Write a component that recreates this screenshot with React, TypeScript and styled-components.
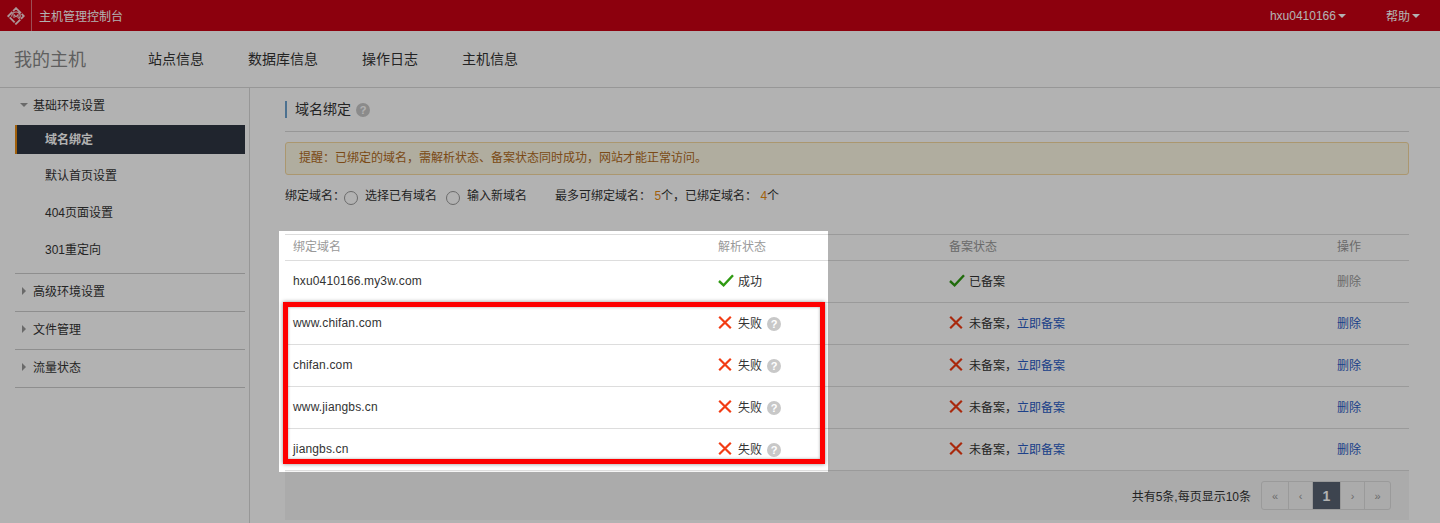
import React from "react";
import styled, { createGlobalStyle } from "styled-components";

const GlobalStyle = createGlobalStyle`
  html, body {
    margin: 0;
    padding: 0;
    background: #fff;
  }
  body {
    font-family: "Liberation Sans", "Noto Sans CJK SC", sans-serif;
    font-size: 12px;
    color: #333;
  }
  * {
    box-sizing: border-box;
  }
`;

const Page = styled.div`
  position: relative;
  height: 523px;
  overflow: hidden;
`;

const TopBar = styled.header`
  height: 31px;
  background: #c90013;
  display: flex;
  align-items: center;
  color: #fff;
  padding-right: 20px;
`;

const LogoCell = styled.div`
  width: 32px;
  height: 31px;
  border-right: 1px solid #e0707a;
  display: flex;
  align-items: center;
  justify-content: center;
`;

const ConsoleTitle = styled.div`
  margin-left: 7px;
  flex: 1;
  font-size: 12px;
`;

const TopMenu = styled.div<{ $gap: number }>`
  margin-left: ${(p) => p.$gap}px;
  display: flex;
  align-items: center;
  gap: 2px;
`;

const Caret = styled.span`
  width: 0;
  height: 0;
  border-left: 4px solid transparent;
  border-right: 4px solid transparent;
  border-top: 4px solid currentColor;
`;

const SubNav = styled.nav`
  height: 57px;
  border-bottom: 1px solid #d9d9d9;
  display: flex;
  align-items: center;
  padding: 0 0 2px 14px;
  font-size: 14px;
  background: #fff;
`;

const HostTitle = styled.div`
  width: 134px;
  font-size: 18px;
  color: #888;
`;

const NavLink = styled.a`
  margin-right: 44px;
  color: #333;
`;

const Body = styled.div`
  display: flex;
`;

const Sidebar = styled.aside`
  width: 250px;
  height: 435px;
  border-right: 1px solid #d9d9d9;
  padding: 0 4px 0 15px;
  flex: none;
`;

const Group = styled.div<{ $open?: boolean }>`
  border-bottom: 1px solid #ccc;
  padding-bottom: ${(p) => (p.$open ? 6 : 4)}px;
`;

const GroupTitle = styled.div`
  height: 33px;
  display: flex;
  align-items: center;
  padding-left: 5px;
  color: #333;
  gap: 4px;
`;

const ArrowDown = styled.span`
  width: 0;
  height: 0;
  border-left: 4px solid transparent;
  border-right: 4px solid transparent;
  border-top: 4px solid #999;
  margin-right: 1px;
`;

const ArrowRight = styled.span`
  width: 0;
  height: 0;
  margin-left: 2px;
  margin-right: 3px;
  border-top: 4px solid transparent;
  border-bottom: 4px solid transparent;
  border-left: 4px solid #999;
`;

const SideItem = styled.div<{ $active?: boolean }>`
  height: ${(p) => (p.$active ? 29 : 37)}px;
  margin: ${(p) => (p.$active ? "4px 0 2px" : "0")};
  display: flex;
  align-items: center;
  padding: ${(p) => (p.$active ? "0 0 3px 28px" : "0 0 0 30px")};
  color: ${(p) => (p.$active ? "#fff" : "#333")};
  background: ${(p) => (p.$active ? "#2f3542" : "transparent")};
  border-left: ${(p) => (p.$active ? "2px solid #e78a11" : "none")};
  font-weight: ${(p) => (p.$active ? 700 : 400)};
`;

const Main = styled.main`
  flex: 1;
  padding: 0 31px 0 35px;
`;

const SectionHead = styled.div`
  height: 44px;
  border-bottom: 1px solid #d9d9d9;
  display: flex;
  align-items: center;
`;

const SectionTitle = styled.h2`
  margin: 0 5px 0 0;
  height: 17px;
  line-height: 17px;
  border-left: 2px solid #6ea2cf;
  padding-left: 8px;
  font-size: 14px;
  font-weight: 400;
  color: #333;
`;

const Help = styled.span`
  width: 14px;
  height: 14px;
  border-radius: 50%;
  background: #c8c8c8;
  color: #fff;
  font-size: 11px;
  font-weight: 700;
  line-height: 14px;
  text-align: center;
  display: inline-block;
  flex: none;
`;

const RowHelp = styled(Help)`
  margin-top: 2px;
`;

const Notice = styled.div`
  margin-top: 10px;
  height: 33px;
  border: 1px solid #f5d8a0;
  border-radius: 3px;
  background: #fdf8e4;
  color: #b06a22;
  display: flex;
  align-items: center;
  padding: 0 0 5px 13px;
`;

const BindRow = styled.div`
  margin-top: 10px;
  height: 20px;
  display: flex;
  align-items: center;
  padding-bottom: 2px;
  color: #333;
`;

const BindLabel = styled.span`
  width: 54px;
  white-space: nowrap;
`;

const RadioDot = styled.span`
  width: 14px;
  height: 14px;
  border: 1px solid #999;
  border-radius: 50%;
  margin: 7px 7px 0 5px;
  flex: none;
`;

const RadioLabel = styled.span`
  margin-right: 4px;
`;

const Limit = styled.span`
  margin-left: 24px;
`;

const Count = styled.b`
  font-weight: 400;
  color: #e78a11;
`;

const DomainTable = styled.table`
  margin-top: 29px;
  width: 100%;
  border-collapse: collapse;
  table-layout: fixed;
  border-top: 1px solid #ddd;

  th {
    height: 26px;
    padding: 0 8px 4px;
    text-align: left;
    font-weight: 400;
    color: #999;
    border-bottom: 1px solid #ddd;
  }

  td {
    height: 42px;
    padding: 0 8px 2px;
    color: #333;
    border-bottom: 1px solid #ddd;
  }
`;

const DomainCell = styled.td`
  letter-spacing: 0.15px;
`;

const StatusCell = styled.div`
  display: flex;
  align-items: center;
  gap: 5px;
`;

const TableLink = styled.a<{ $muted?: boolean }>`
  color: ${(p) => (p.$muted ? "#999" : "#2a5cc4")};
`;

const TableFoot = styled.div`
  height: 49px;
  background: #f5f5f5;
  display: flex;
  align-items: center;
  justify-content: flex-end;
  padding-right: 18px;
`;

const Pager = styled.div`
  margin-left: 10px;
  display: flex;
  height: 29px;
  border: 1px solid #ddd;
  border-radius: 3px;
`;

const PagerCell = styled.span<{ $active?: boolean; $w: number }>`
  width: ${(p) => p.$w}px;
  display: flex;
  align-items: center;
  justify-content: center;
  border-left: 1px solid #ddd;
  color: ${(p) => (p.$active ? "#fff" : "#999")};
  background: ${(p) => (p.$active ? "#586272" : "transparent")};
  font-size: ${(p) => (p.$active ? 14 : 11)}px;
  font-weight: ${(p) => (p.$active ? 700 : 400)};

  &:first-child {
    border-left: none;
  }
`;

const Spotlight = styled.div`
  position: absolute;
  left: 279px;
  top: 231px;
  width: 549px;
  height: 241px;
  box-shadow: 0 0 0 2000px rgba(0, 0, 0, 0.3);
`;

const RedFrame = styled.div`
  position: absolute;
  left: 4px;
  top: 71px;
  width: 542px;
  height: 162px;
  border: 5px solid #fe0000;
  box-shadow: 0 0 4px rgba(0, 0, 0, 0.45), inset 0 0 3px rgba(0, 0, 0, 0.35);
`;

const LogoMark = () => (
  <svg width="18" height="18" viewBox="0 0 18 18" fill="none" opacity="0.85">
    <path d="M9 1.2 16.8 9 9 16.8 1.2 9Z" stroke="#fff" strokeWidth="1.8" strokeDasharray="7 1" />
    <path d="M4.6 9.6C5 6.4 7 5 9.2 5c2.4 0 4 1.7 4 3.8 0 1.5-.9 2.6-2 2.6" stroke="#fff" strokeWidth="1.2" />
    <path d="M7 11V7.6L9 9.8 11 7.6V11" stroke="#fff" strokeWidth="1.1" />
  </svg>
);

const CheckIcon = styled.svg`
  margin-right: -1px;
`;

const Check = () => (
  <CheckIcon width="16" height="13" viewBox="0 0 16 13" fill="none">
    <path d="M1 7 5.6 11.3 15 1.2" stroke="#2f9a12" strokeWidth="2.4" />
  </CheckIcon>
);

const CrossIcon = styled.svg`
  margin-right: 1px;
`;

const Cross = () => (
  <CrossIcon width="14" height="13" viewBox="0 0 14 13" fill="none">
    <path d="M1.2 .8 12.8 12.2M12.8 .8 1.2 12.2" stroke="#f23c14" strokeWidth="2.2" />
  </CrossIcon>
);

const rows = ["www.chifan.com", "chifan.com", "www.jiangbs.cn", "jiangbs.cn"];

const App = () => {
  return (
    <Page>
      <GlobalStyle />
      <TopBar>
        <LogoCell>
          <LogoMark />
        </LogoCell>
        <ConsoleTitle>主机管理控制台</ConsoleTitle>
        <TopMenu $gap={0}>
          hxu0410166
          <Caret />
        </TopMenu>
        <TopMenu $gap={40}>
          帮助
          <Caret />
        </TopMenu>
      </TopBar>
      <SubNav>
        <HostTitle>我的主机</HostTitle>
        <NavLink>站点信息</NavLink>
        <NavLink>数据库信息</NavLink>
        <NavLink>操作日志</NavLink>
        <NavLink>主机信息</NavLink>
      </SubNav>
      <Body>
        <Sidebar>
          <Group $open>
            <GroupTitle>
              <ArrowDown />
              基础环境设置
            </GroupTitle>
            <SideItem $active>域名绑定</SideItem>
            <SideItem>默认首页设置</SideItem>
            <SideItem>404页面设置</SideItem>
            <SideItem>301重定向</SideItem>
          </Group>
          {["高级环境设置", "文件管理", "流量状态"].map((name) => (
            <Group key={name}>
              <GroupTitle>
                <ArrowRight />
                {name}
              </GroupTitle>
            </Group>
          ))}
        </Sidebar>
        <Main>
          <SectionHead>
            <SectionTitle>域名绑定</SectionTitle>
            <Help>?</Help>
          </SectionHead>
          <Notice>提醒：已绑定的域名，需解析状态、备案状态同时成功，网站才能正常访问。</Notice>
          <BindRow>
            <BindLabel>绑定域名：</BindLabel>
            <RadioDot />
            <RadioLabel>选择已有域名</RadioLabel>
            <RadioDot />
            <RadioLabel>输入新域名</RadioLabel>
            <Limit>
              最多可绑定域名： <Count>5</Count>个，已绑定域名： <Count>4</Count>个
            </Limit>
          </BindRow>
          <DomainTable>
            <colgroup>
              <col width="425" />
              <col width="231" />
              <col width="388" />
              <col width="80" />
            </colgroup>
            <thead>
              <tr>
                <th>绑定域名</th>
                <th>解析状态</th>
                <th>备案状态</th>
                <th>操作</th>
              </tr>
            </thead>
            <tbody>
              <tr>
                <DomainCell>hxu0410166.my3w.com</DomainCell>
                <td>
                  <StatusCell>
                    <Check />
                    成功
                  </StatusCell>
                </td>
                <td>
                  <StatusCell>
                    <Check />
                    已备案
                  </StatusCell>
                </td>
                <td>
                  <TableLink $muted>删除</TableLink>
                </td>
              </tr>
              {rows.map((domain) => (
                <tr key={domain}>
                  <DomainCell>{domain}</DomainCell>
                  <td>
                    <StatusCell>
                      <Cross />
                      失败
                      <RowHelp>?</RowHelp>
                    </StatusCell>
                  </td>
                  <td>
                    <StatusCell>
                      <Cross />
                      <span>
                        未备案，<TableLink>立即备案</TableLink>
                      </span>
                    </StatusCell>
                  </td>
                  <td>
                    <TableLink>删除</TableLink>
                  </td>
                </tr>
              ))}
            </tbody>
          </DomainTable>
          <TableFoot>
            共有5条,每页显示10条
            <Pager>
              <PagerCell $w={26}>«</PagerCell>
              <PagerCell $w={24}>‹</PagerCell>
              <PagerCell $w={28} $active>
                1
              </PagerCell>
              <PagerCell $w={24}>›</PagerCell>
              <PagerCell $w={26}>»</PagerCell>
            </Pager>
          </TableFoot>
        </Main>
      </Body>
      <Spotlight>
        <RedFrame />
      </Spotlight>
    </Page>
  );
};

export default App;
